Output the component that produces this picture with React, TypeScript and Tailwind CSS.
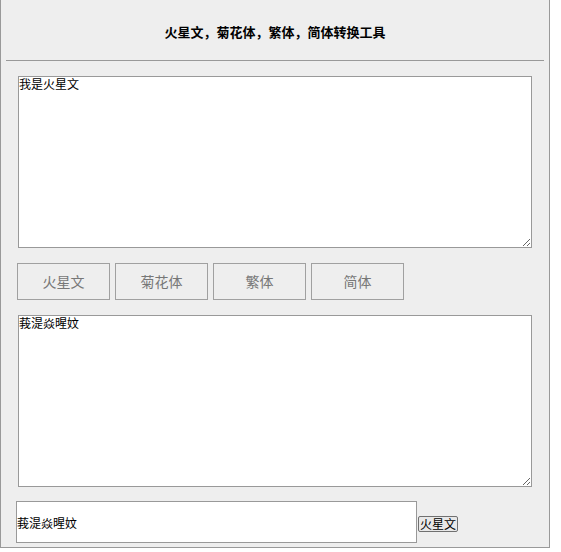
export default function App() {
  const buttons = ["火星文", "菊花体", "繁体", "简体"];

  return (
    <div
      className="w-[550px] bg-[#eeeeee] border-x border-b border-[#999999] pb-[4px]"
      style={{ fontFamily: '"Noto Sans CJK SC", "Liberation Sans", sans-serif' }}
    >
      <div className="pt-[24px] text-center text-[13px] leading-[16px] font-bold text-black">
        火星文，菊花体，繁体，简体转换工具
      </div>
      <hr className="mt-[20px] mx-[5px] border-t border-[#999999]" />

      <textarea
        className="block mt-[15px] ml-[17px] w-[514px] h-[172px] bg-white border border-[#999999] p-0 text-[12px] leading-[14px] text-black outline-none"
        defaultValue="我是火星文"
      />

      <div className="flex gap-[5px] mt-[15px] ml-[16px]">
        {buttons.map((b) => (
          <button
            key={b}
            className="w-[93px] h-[37px] border border-[#a0a0a0] bg-[#eeeeee] text-[14px] text-[#777777]"
          >
            {b}
          </button>
        ))}
      </div>

      <textarea
        className="block mt-[15px] ml-[17px] w-[514px] h-[172px] bg-white border border-[#999999] p-0 text-[12px] leading-[14px] text-black outline-none"
        defaultValue="莪湜焱暒妏"
      />

      <div className="flex items-start mt-[14px] ml-[15px]">
        <input
          className="w-[401px] h-[42px] bg-white border border-[#999999] px-0 text-[12px] text-black outline-none"
          defaultValue="莪湜焱暒妏"
        />
        <button className="ml-[1px] mt-[15px] h-[16px] px-[1px] border border-[#707070] rounded-[2px] bg-[#e8e8e8] text-[12px] leading-[14px] text-black">
          火星文
        </button>
      </div>
    </div>
  );
}
